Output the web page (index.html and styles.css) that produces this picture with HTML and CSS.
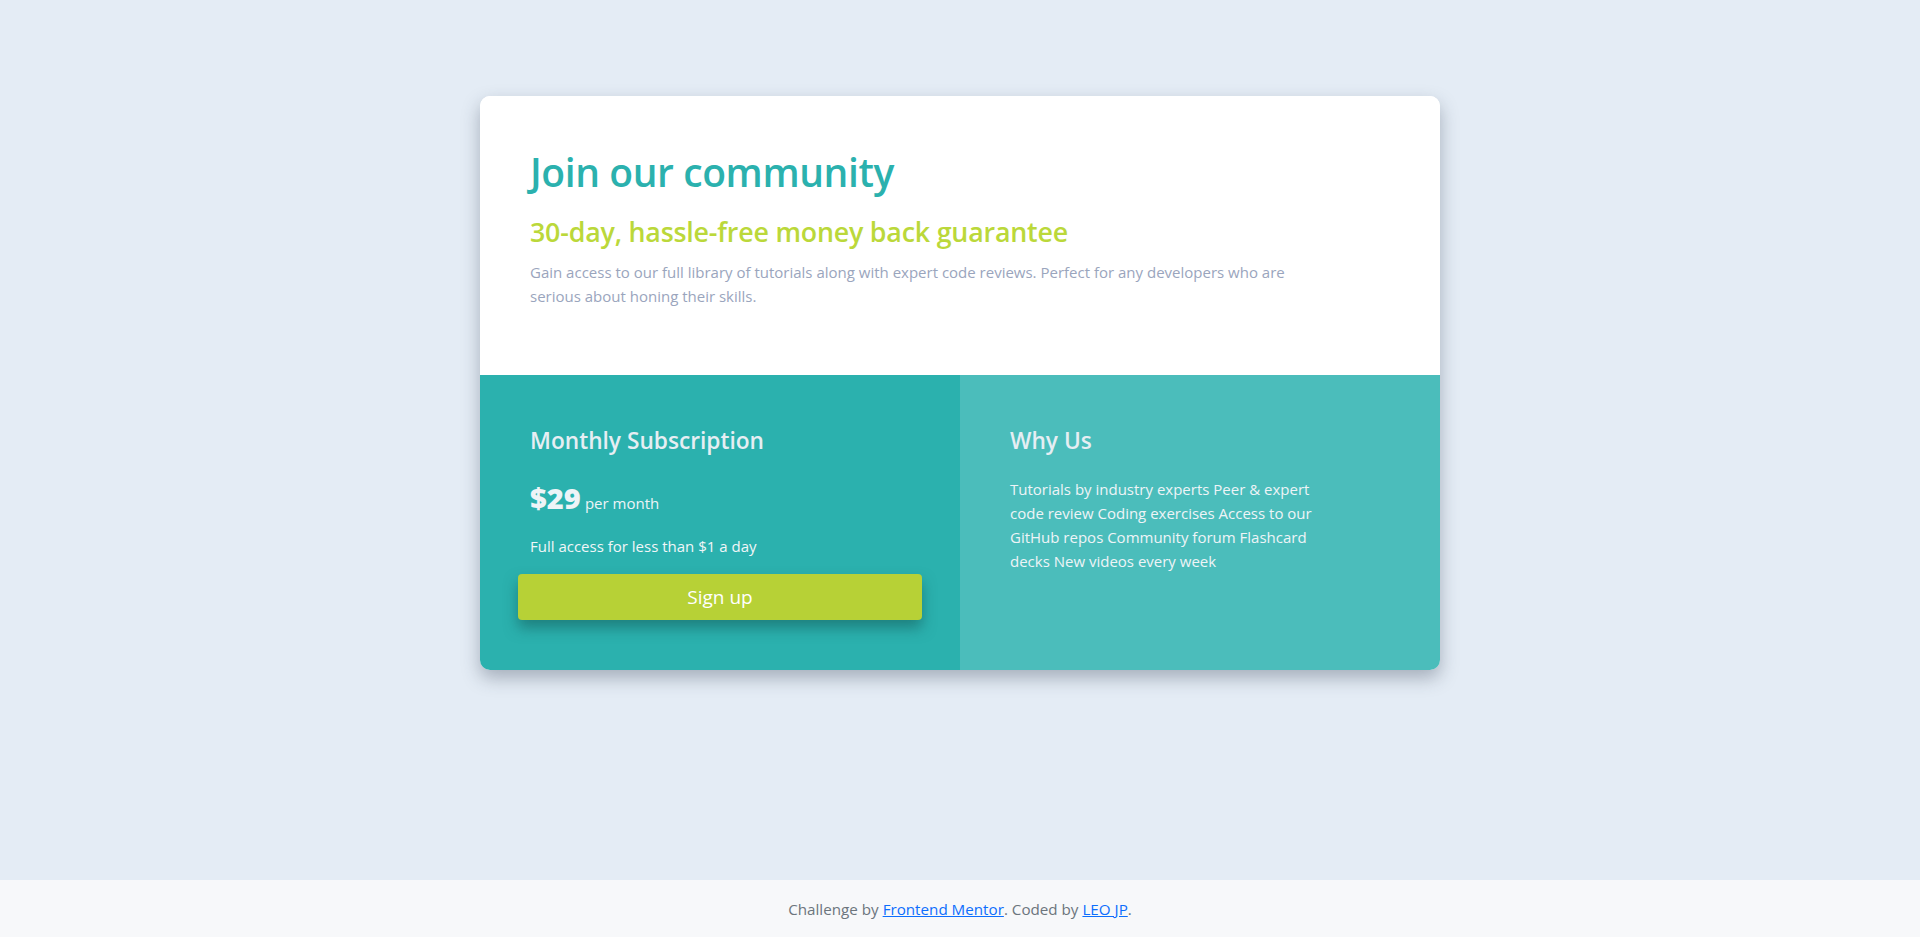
FILE: index.html
```html
<!DOCTYPE html>
<html lang="en">
<head>
<meta charset="utf-8">
<title>Single price grid component</title>
<link rel="stylesheet" href="styles.css">
</head>
<body>
<div class="page">
  <main class="main">
    <section class="card">
      <div class="intro">
        <h1 class="title">Join our community</h1>
        <h2 class="subtitle">30-day, hassle-free money back guarantee</h2>
        <p class="lead">Gain access to our full library of tutorials along with expert code reviews. Perfect for any developers who are serious about honing their skills.</p>
      </div>
      <div class="plans">
        <div class="plan plan-sub">
          <h3 class="plan-title">Monthly Subscription</h3>
          <p class="price"><span class="amount">$29</span> <span class="per">per month</span></p>
          <p class="plan-note">Full access for less than $1 a day</p>
          <button class="signup" type="button">Sign up</button>
        </div>
        <div class="plan plan-why">
          <h3 class="plan-title">Why Us</h3>
          <p class="why-list">Tutorials by industry experts Peer &amp; expert code review Coding exercises Access to our GitHub repos Community forum Flashcard decks New videos every week</p>
        </div>
      </div>
    </section>
  </main>
  <footer class="footer">
    <p class="attribution">Challenge by <a href="#">Frontend Mentor</a>. Coded by <a href="#">LEO JP</a>.</p>
  </footer>
</div>
</body>
</html>
```

FILE: styles.css
```css
* { box-sizing: border-box; }

html, body {
  margin: 0;
  padding: 0;
}

body {
  background: #e4ecf5;
  font-family: "Open Sans", "Noto Sans", sans-serif;
  color: #9aa5bd;
}

.page {
  min-height: 100vh;
  display: flex;
  flex-direction: column;
}

.main {
  flex: 1;
  display: flex;
  justify-content: center;
  align-items: flex-start;
  padding-top: 96px;
}

.card {
  width: 960px;
  border-radius: 10px;
  overflow: hidden;
  background: #fff;
  box-shadow: 0 8px 18px rgba(50, 60, 80, 0.35);
}

.intro {
  padding: 52px 50px 67px;
  background: #fff;
}

.title {
  margin: 0;
  font-size: 39px;
  line-height: 48px;
  font-weight: 600;
  color: #2bb1ae;
  letter-spacing: -0.4px;
}

.subtitle {
  margin: 20px 0 0;
  font-size: 26.8px;
  line-height: 32px;
  font-weight: 600;
  color: #bbd83a;
  letter-spacing: -0.2px;
}

.lead {
  margin: 12px 0 0;
  font-size: 15px;
  line-height: 24px;
  color: #9aa5bd;
  max-width: 780px;
}

.plans {
  display: grid;
  grid-template-columns: 1fr 1fr;
}

.plan {
  padding: 50px 50px 50px;
  color: #e8f1f6;
}

.plan-sub {
  background: #2bb1ae;
}

.plan-why {
  background: #4bbdbb;
}

.plan-title {
  margin: 0;
  font-size: 22.7px;
  line-height: 32px;
  font-weight: 600;
  color: #e6eef3;
}

.price {
  margin: 21px 0 0;
  line-height: 40px;
  font-size: 16px;
}

.amount {
  font-size: 29px;
  font-weight: 800;
  color: #eef4f7;
}

.per {
  font-size: 15px;
  color: #eef4f7;
}

.plan-note {
  margin: 11px 0 0;
  font-size: 15px;
  line-height: 24px;
  color: #f1f6f8;
}

.signup {
  display: block;
  width: calc(100% + 24px);
  margin: 16px -12px 0;
  height: 46px;
  border: 0;
  border-radius: 4px;
  background: #b7d136;
  color: #fff;
  font-family: inherit;
  font-size: 19px;
  box-shadow: 0 8px 14px rgba(20, 90, 90, 0.55);
  cursor: pointer;
}

.why-list {
  margin: 20px 0 0;
  max-width: 320px;
  font-size: 15px;
  line-height: 24px;
  color: #eef4f7;
}

.footer {
  background: #f7f8fa;
  height: 57px;
  display: flex;
  align-items: center;
  justify-content: center;
}

.attribution {
  margin: 0;
  font-size: 15.2px;
  color: #6c757d;
}

.attribution a {
  color: #0d6efd;
}
```
